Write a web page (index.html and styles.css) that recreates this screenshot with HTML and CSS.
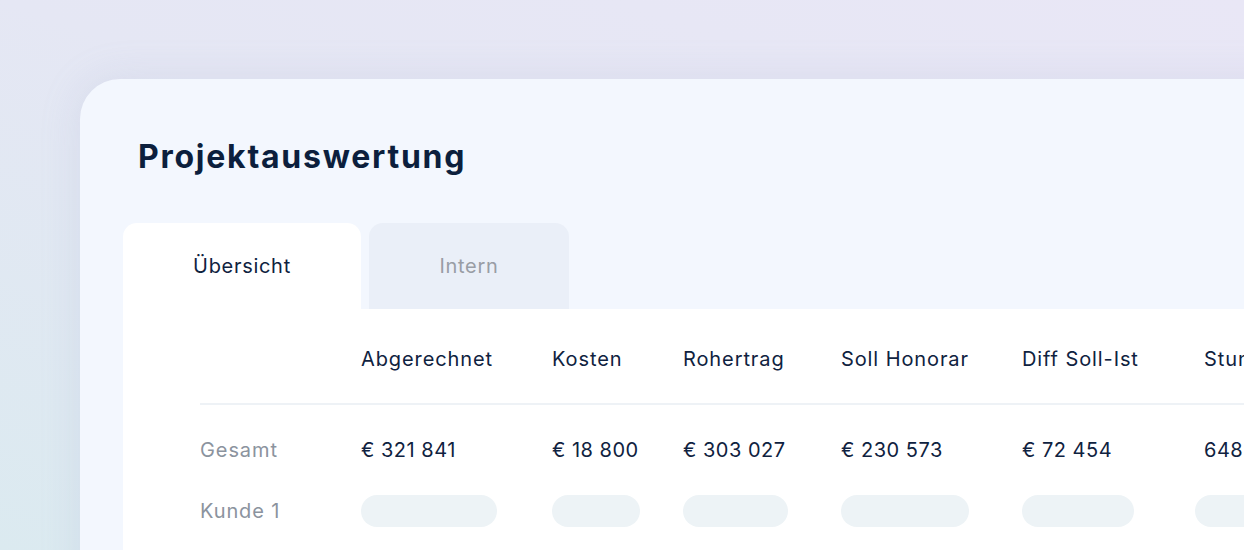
FILE: index.html
```html
<!DOCTYPE html>
<html lang="de">
<head>
<meta charset="utf-8">
<link rel="stylesheet" href="styles.css">
</head>
<body>
<div class="stage">
  <div class="card">
    <h1 class="title">Projektauswertung</h1>
    <div class="tabs">
      <div class="tab tab-active">Übersicht</div>
      <div class="tab tab-idle">Intern</div>
    </div>
    <div class="panel">
      <div class="grid">
        <div class="cell head"></div>
        <div class="cell head">Abgerechnet</div>
        <div class="cell head">Kosten</div>
        <div class="cell head">Rohertrag</div>
        <div class="cell head">Soll Honorar</div>
        <div class="cell head">Diff Soll-Ist</div>
        <div class="cell head">Stunden</div>

        <div class="cell label">Gesamt</div>
        <div class="cell val">€ 321 841</div>
        <div class="cell val">€ 18 800</div>
        <div class="cell val">€ 303 027</div>
        <div class="cell val">€ 230 573</div>
        <div class="cell val">€ 72 454</div>
        <div class="cell val">648</div>

        <div class="cell label row3">Kunde 1</div>
        <div class="cell row3"><span class="pill pill-1"></span></div>
        <div class="cell row3"><span class="pill pill-2"></span></div>
        <div class="cell row3"><span class="pill pill-3"></span></div>
        <div class="cell row3"><span class="pill pill-4"></span></div>
        <div class="cell row3"><span class="pill pill-5"></span></div>
        <div class="cell row3"><span class="pill pill-6"></span></div>
      </div>
    </div>
  </div>
</div>
</body>
</html>
```
FILE: styles.css
```css
html, body {
  margin: 0;
  padding: 0;
  width: 1244px;
  height: 550px;
  overflow: hidden;
}
body {
  font-family: "Inter", "Noto Sans", sans-serif;
  background: linear-gradient(200deg, #e9e7f6 0%, #e5e7f4 45%, #dbeaf0 100%);
}
.stage {
  width: 1244px;
  height: 550px;
  padding: 79px 0 0 80px;
  box-sizing: border-box;
  overflow: hidden;
}
.card {
  width: 1300px;
  height: 600px;
  box-sizing: border-box;
  padding: 56px 0 0 43px;
  background: #f3f7fe;
  border-radius: 40px 0 0 0;
  box-shadow: 0 0 40px rgba(150, 160, 200, 0.18);
}
.title {
  margin: 0 0 0 15px;
  font-size: 32px;
  line-height: 44px;
  font-weight: 700;
  color: #0c1f3d;
  letter-spacing: 1.75px;
}
.tabs {
  display: flex;
  gap: 8px;
  margin-top: 44px;
}
.tab {
  height: 86px;
  display: flex;
  align-items: center;
  justify-content: center;
  font-size: 20px;
  letter-spacing: 0.7px;
  border-radius: 14px 14px 0 0;
}
.tab-active {
  width: 238px;
  background: #ffffff;
  color: #0f2240;
}
.tab-idle {
  width: 200px;
  background: #eaeff8;
  color: #999da5;
}
.panel {
  background: #ffffff;
  height: 400px;
  padding-left: 77px;
}
.grid {
  display: grid;
  grid-template-columns: 161px 191px 131px 158px 181px 182px 200px;
  grid-template-rows: 96px 90px 32px;
  color: #0f2240;
  font-size: 20px;
  letter-spacing: 0.9px;
}
.cell {
  display: flex;
  align-items: center;
  white-space: nowrap;
}
.head {
  border-bottom: 2px solid #eef2f6;
  padding-top: 6px;
}
.val {
  letter-spacing: 0.5px;
}
.label {
  color: #8b939e;
}
.pill {
  display: block;
  height: 32px;
  border-radius: 16px;
  background: #edf3f6;
}
.pill-1 { width: 136px; }
.pill-2 { width: 88px; }
.pill-3 { width: 105px; }
.pill-4 { width: 128px; }
.pill-5 { width: 112px; }
.pill-6 { width: 120px; margin-left: -9px; }
```
